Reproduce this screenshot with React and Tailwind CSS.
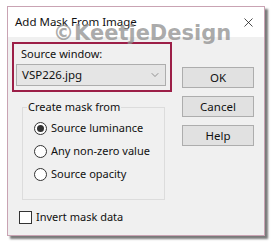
import { ChevronDown, X } from "lucide-react";

export default function App() {
  const font = { fontFamily: '"Noto Sans", "Open Sans", sans-serif' };

  const Radio = ({ checked, label }) => (
    <div className="flex items-center gap-[4px] h-[23px]">
      <div className="w-[13px] h-[13px] rounded-full border border-[#333] bg-white flex items-center justify-center">
        {checked && <div className="w-[7px] h-[7px] rounded-full bg-[#333]" />}
      </div>
      <span>{label}</span>
    </div>
  );

  const Btn = ({ children }) => (
    <div className="w-[72px] h-[21px] bg-[#e1e1e1] border border-[#adadad] flex items-center justify-center text-[11.5px]">
      {children}
    </div>
  );

  return (
    <div className="w-[274px] h-[244px] bg-white pt-[6px] pl-[7px] text-[11px] text-[#111]" style={font}>
      <div className="relative w-[258px] h-[230px] border border-[#c9a3b3] bg-[#f0f0f0] shadow-[3px_3px_2px_#7a7a7a] flex flex-col">
        {/* TITLE */}
        <div className="h-[30px] bg-white flex items-center justify-between pl-[7px] pr-[8px]">
          <span className="text-[11.5px]">Add Mask From Image</span>
          <X size={15} strokeWidth={1.2} />
        </div>

        {/* watermark */}
        <div
          className="absolute left-[45px] top-[11px] text-[21px] font-bold text-[#8f8f8f]/75"
          style={{ fontFamily: '"DejaVu Sans", Verdana, sans-serif' }}
        >
          ©KeetjeDesign
        </div>

        {/* BODY */}
        <div className="flex pt-[5px] pl-[4px] gap-[10px]">
          <div className="flex flex-col">
            <div className="w-[160px] h-[50px] border-2 border-[#9c1f47] pl-[2px] flex flex-col">
              <div className="h-[20px] pl-[5px] flex items-center">Source window:</div>
              <div className="w-[150px] h-[22px] bg-[#e5e5e5] border border-[#adadad] flex items-center justify-between pl-[5px] pr-[4px]">
                <span className="text-[11.5px]">VSP226.jpg</span>
                <ChevronDown size={12} strokeWidth={1.2} className="text-[#555]" />
              </div>
            </div>

            <div className="relative ml-[10px] mt-[15px] w-[143px] h-[93px] border border-[#dcdcdc] pl-[11px] pt-[9px]">
              <span className="absolute left-[4px] top-[-9px] bg-[#f0f0f0] px-[1px]">Create mask from</span>
              <Radio checked label="Source luminance" />
              <Radio label="Any non-zero value" />
              <Radio label="Source opacity" />
            </div>

            <div className="flex items-center gap-[4px] ml-[7px] mt-[9px]">
              <div className="w-[13px] h-[13px] border border-[#333] bg-white" />
              <span>Invert mask data</span>
            </div>
          </div>

          <div className="flex flex-col gap-[8px] pt-[25px]">
            <Btn>OK</Btn>
            <Btn>Cancel</Btn>
            <Btn>Help</Btn>
          </div>
        </div>
      </div>
    </div>
  );
}
